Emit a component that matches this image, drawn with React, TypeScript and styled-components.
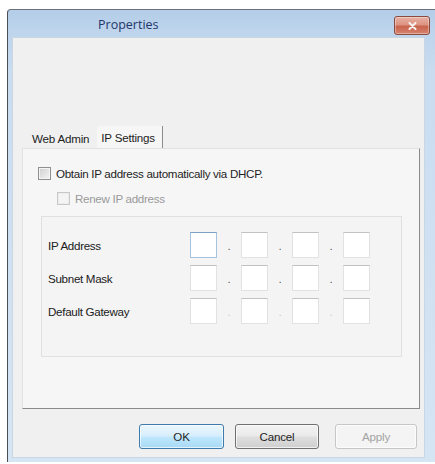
import React from 'react';
import styled, { createGlobalStyle } from 'styled-components';

const GlobalStyle = createGlobalStyle`
  html, body {
    margin: 0;
    padding: 0;
    background: #ffffff;
    overflow: hidden;
  }
  body {
    font-family: "Liberation Sans", Arial, sans-serif;
    font-size: 11.6px;
    color: #1e1e1e;
  }
`;

const Window = styled.div`
  margin: 9px 0 0 7px;
  width: 428px;
  height: 453px;
  box-sizing: border-box;
  display: flex;
  flex-direction: column;
  background: linear-gradient(180deg, #b4cde8 0px, #bdd4ec 20px, #c9dcf0 60px, #d6e5f4 100%);
  border-left: 1px solid #4a4f57;
  border-top: 1px solid #6b7079;
  border-top-left-radius: 4px;
  padding: 0 10px 4px 4px;
`;

const TitleBar = styled.div`
  height: 27px;
  display: flex;
  align-items: center;
  justify-content: space-between;
  padding-left: 86px;
`;

const Title = styled.span`
  font-family: "Open Sans", "Liberation Sans", sans-serif;
  font-size: 12.5px;
  color: #23366a;
  margin-top: 2px;
`;

const CloseButton = styled.button`
  width: 36px;
  height: 19px;
  margin-top: 4px;
  margin-right: -5px;
  border: 1px solid #8a4a3f;
  border-radius: 3px;
  background: linear-gradient(180deg, #e8b1a4 0%, #dd9482 45%, #c9644e 55%, #d6836f 100%);
  display: flex;
  align-items: center;
  justify-content: center;
  padding: 0;
  box-shadow: inset 0 0 0 1px rgba(255, 255, 255, 0.35);
`;

const Client = styled.div`
  flex: 1;
  display: flex;
  flex-direction: column;
  background: #f0f0f0;
  border: 1px solid #c9d6e3;
  padding: 88px 4px 0 9px;
`;

const TabStrip = styled.div`
  display: flex;
  align-items: flex-end;
  height: 22px;
  padding-left: 3px;
`;

const Tab = styled.div<{ $active?: boolean }>`
  height: ${p => (p.$active ? 22 : 20)}px;
  box-sizing: border-box;
  display: flex;
  align-items: center;
  padding: 0 ${p => (p.$active ? 7 : 7)}px 0 ${p => (p.$active ? 4 : 7)}px;
  background: ${p => (p.$active ? '#f6f6f6' : '#f0f0f0')};
  border-right: 1px solid ${p => (p.$active ? '#8c8c8c' : 'transparent')};
  color: #222;
  letter-spacing: -0.2px;
`;

const Panel = styled.div`
  height: 261px;
  box-sizing: border-box;
  background: #f6f6f6;
  border: 1px solid #e2e2e2;
  border-right: 1px solid #8a8a8a;
  border-bottom: 1px solid #8a8a8a;
  padding: 17px 0 0 15px;
  display: flex;
  flex-direction: column;
`;

const CheckRow = styled.label<{ $indent?: number; $disabled?: boolean }>`
  display: flex;
  align-items: center;
  gap: 5px;
  height: 14px;
  margin-left: ${p => p.$indent ?? 0}px;
  margin-bottom: 11px;
  color: ${p => (p.$disabled ? '#9a9a9a' : '#1e1e1e')};
  letter-spacing: -0.3px;
`;

const CheckBox = styled.span<{ $disabled?: boolean }>`
  width: 13px;
  height: 13px;
  box-sizing: border-box;
  border: 1px solid ${p => (p.$disabled ? '#c8c8c8' : '#8f8f8f')};
  background: ${p =>
    p.$disabled
      ? '#f4f4f4'
      : 'linear-gradient(135deg, #cfcfcf 0%, #e6e6e6 60%, #f2f2f2 100%)'};
  box-shadow: inset 0 0 0 1px ${p => (p.$disabled ? '#ececec' : '#f4f4f4')};
`;

const Group = styled.div`
  margin: 0 17px 0 3px;
  height: 141px;
  box-sizing: border-box;
  border: 1px solid #e0e0e0;
  background: #f4f4f4;
  padding: 15px 0 0 6px;
  display: flex;
  flex-direction: column;
  gap: 7px;
`;

const FieldRow = styled.div`
  display: flex;
  align-items: center;
  height: 26px;
`;

const FieldLabel = styled.span`
  width: 142px;
  flex: none;
  letter-spacing: -0.3px;
  color: #202020;
`;

const Octet = styled.div<{ $focused?: boolean }>`
  width: 27px;
  height: 26px;
  box-sizing: border-box;
  background: #ffffff;
  border: 1px solid ${p => (p.$focused ? '#a6c2de' : '#e2e2e2')};
  border-top-color: ${p => (p.$focused ? '#7d9fc2' : '#c2c2c2')};
`;

const Dot = styled.span<{ $faint?: boolean }>`
  width: 24px;
  text-align: center;
  color: ${p => (p.$faint ? '#c8c8c8' : '#555')};
  line-height: 26px;
  padding-top: 1px;
`;

const ButtonRow = styled.div`
  display: flex;
  justify-content: flex-end;
  gap: 11px;
  padding: 15px 3px 0 0;
`;

const DialogButton = styled.button<{ $variant?: 'default' | 'normal' | 'disabled'; $w: number }>`
  width: ${p => p.$w}px;
  height: 25px;
  border-radius: 3px;
  font-family: "Liberation Sans", Arial, sans-serif;
  font-size: 11.6px;
  letter-spacing: -0.2px;
  padding: 0;
  margin-left: ${p => (p.$variant === 'disabled' ? 5 : 0)}px;
  color: ${p => (p.$variant === 'disabled' ? '#a3a3a3' : '#1e1e1e')};
  border: 1px solid
    ${p =>
      p.$variant === 'default' ? '#3d7bad' : p.$variant === 'disabled' ? '#c6c6c6' : '#707070'};
  background: ${p =>
    p.$variant === 'default'
      ? 'linear-gradient(180deg, #eaf6fd 0%, #d9effc 45%, #bee6fd 55%, #a7d9f5 100%)'
      : p.$variant === 'disabled'
      ? '#f4f4f4'
      : 'linear-gradient(180deg, #f2f2f2 0%, #ebebeb 45%, #dddddd 55%, #cfcfcf 100%)'};
  box-shadow: inset 0 0 0 1px rgba(255, 255, 255, 0.7);
`;

const fields = ['IP Address', 'Subnet Mask', 'Default Gateway'];

const App: React.FC = () => {
  return (
    <>
      <GlobalStyle />
      <Window>
        <TitleBar>
          <Title>Properties</Title>
          <CloseButton aria-label="Close">
            <svg width="9" height="8" viewBox="0 0 9 8">
              <path d="M1.5 1 L7.5 7 M7.5 1 L1.5 7" stroke="#f6f0ee" strokeWidth="2" strokeLinecap="round" />
            </svg>
          </CloseButton>
        </TitleBar>
        <Client>
          <TabStrip>
            <Tab>Web Admin</Tab>
            <Tab $active>IP Settings</Tab>
          </TabStrip>
          <Panel>
            <CheckRow>
              <CheckBox />
              Obtain IP address automatically via DHCP.
            </CheckRow>
            <CheckRow $indent={19} $disabled>
              <CheckBox $disabled />
              Renew IP address
            </CheckRow>
            <Group>
              {fields.map((name, row) => (
                <FieldRow key={name}>
                  <FieldLabel>{name}</FieldLabel>
                  {[0, 1, 2, 3].map(i => (
                    <React.Fragment key={i}>
                      <Octet $focused={row === 0 && i === 0} />
                      {i < 3 && <Dot $faint={row === 2}>.</Dot>}
                    </React.Fragment>
                  ))}
                </FieldRow>
              ))}
            </Group>
          </Panel>
          <ButtonRow>
            <DialogButton $variant="default" $w={85}>OK</DialogButton>
            <DialogButton $variant="normal" $w={84}>Cancel</DialogButton>
            <DialogButton $variant="disabled" $w={82}>Apply</DialogButton>
          </ButtonRow>
        </Client>
      </Window>
    </>
  );
};

export default App;
